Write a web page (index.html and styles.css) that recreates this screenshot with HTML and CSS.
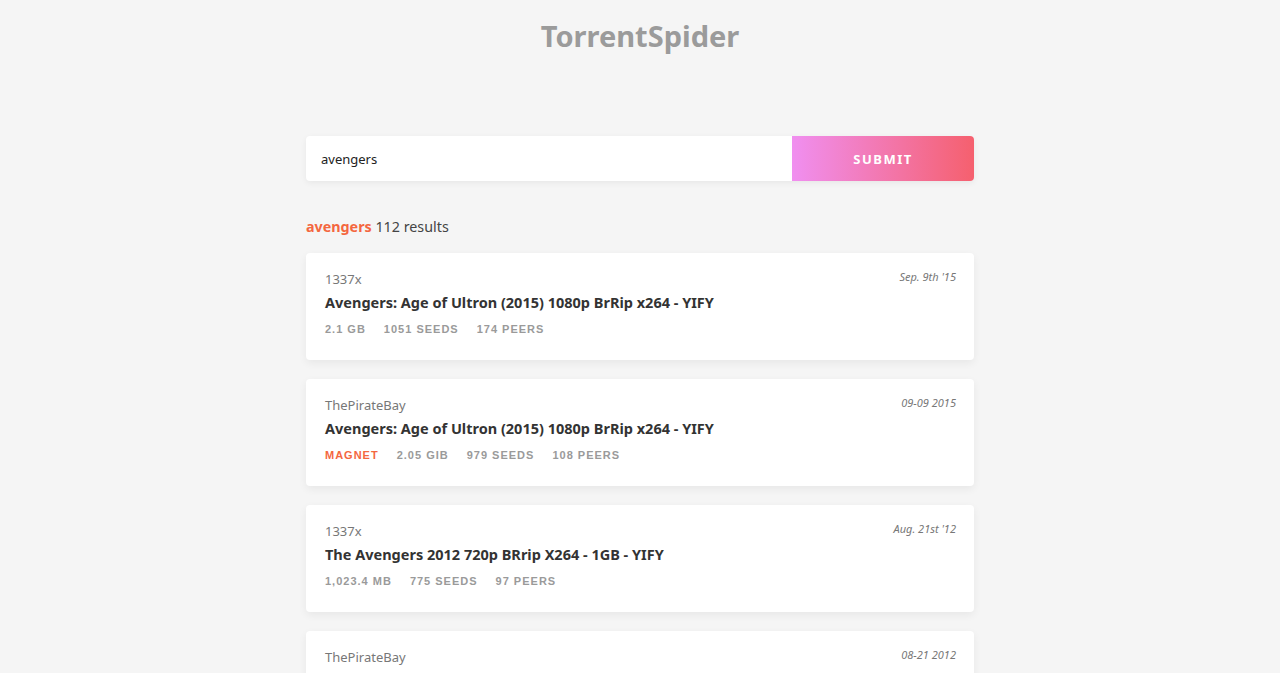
FILE: index.html
```html
<!DOCTYPE html>
<html lang="en">
<head>
  <meta charset="UTF-8" />
  <title>TorrentSpider</title>
  <link rel="stylesheet" href="styles.css">
</head>
<body>

  <h1 class="logo">TorrentSpider</h1>

  <div class="wrap">
    <form class="search">
      <input type="text" class="search-input" value="avengers" />
      <button type="submit" class="search-btn">Submit</button>
    </form>

    <div class="summary"><span class="term">avengers</span> 112 results</div>

    <div class="results">
      <div class="result">
        <div class="result-top">
          <span class="source">1337x</span>
          <span class="date">Sep. 9th '15</span>
        </div>
        <div class="result-title">Avengers: Age of Ultron (2015) 1080p BrRip x264 - YIFY</div>
        <div class="meta">
          <span>2.1 GB</span>
          <span>1051 seeds</span>
          <span>174 peers</span>
        </div>
      </div>

      <div class="result">
        <div class="result-top">
          <span class="source">ThePirateBay</span>
          <span class="date">09-09 2015</span>
        </div>
        <div class="result-title">Avengers: Age of Ultron (2015) 1080p BrRip x264 - YIFY</div>
        <div class="meta">
          <a class="magnet">Magnet</a>
          <span>2.05 GiB</span>
          <span>979 seeds</span>
          <span>108 peers</span>
        </div>
      </div>

      <div class="result">
        <div class="result-top">
          <span class="source">1337x</span>
          <span class="date">Aug. 21st '12</span>
        </div>
        <div class="result-title">The Avengers 2012 720p BRrip X264 - 1GB - YIFY</div>
        <div class="meta">
          <span>1,023.4 MB</span>
          <span>775 seeds</span>
          <span>97 peers</span>
        </div>
      </div>

      <div class="result">
        <div class="result-top">
          <span class="source">ThePirateBay</span>
          <span class="date">08-21 2012</span>
        </div>
        <div class="result-title">The Avengers (2012) 1080p BrRip x264 - YIFY</div>
        <div class="meta">
          <a class="magnet">Magnet</a>
          <span>1.84 GiB</span>
          <span>612 seeds</span>
          <span>88 peers</span>
        </div>
      </div>
    </div>
  </div>

</body>
</html>
```

FILE: styles.css
```css
body {
  margin: 0;
  padding: 0 0 40px;
  background: #f5f5f5;
  color: #333;
  font-family: 'Noto Sans', 'Open Sans', sans-serif;
}

.logo {
  margin: 0;
  padding-top: 17px;
  text-align: center;
  font-size: 29px;
  line-height: 38px;
  font-weight: 700;
  color: #9b9b9b;
}

.wrap {
  width: 668px;
  margin: 81px auto 0;
}

.search {
  display: flex;
  height: 45px;
  border-radius: 4px;
  background: #fff;
  box-shadow: 0 2px 6px rgba(0,0,0,0.06);
  overflow: hidden;
}

.search-input {
  flex: 1;
  border: none;
  outline: none;
  padding: 0 15px;
  font-family: inherit;
  font-size: 13px;
  color: #222;
  background: transparent;
}

.search-btn {
  width: 182px;
  border: none;
  background: linear-gradient(to right, #f08ff0, #f5606e);
  color: #fff;
  font-family: inherit;
  font-size: 13px;
  font-weight: 700;
  letter-spacing: 1.5px;
  text-transform: uppercase;
  cursor: pointer;
}

.summary {
  margin-top: 35px;
  font-size: 14.3px;
  line-height: 22px;
  color: #444;
}

.summary .term {
  font-weight: 700;
  color: #f4673f;
}

.results {
  margin-top: 15px;
  display: flex;
  flex-direction: column;
  gap: 19px;
}

.result {
  background: #fff;
  border-radius: 4px;
  padding: 16px 18px 24px 19px;
  box-shadow: 0 3px 8px rgba(0,0,0,0.06);
}

.result-top {
  display: flex;
  justify-content: space-between;
  align-items: flex-start;
}

.source {
  font-size: 13px;
  line-height: 20px;
  color: #777;
}

.date {
  font-size: 11px;
  line-height: 16px;
  font-style: italic;
  color: #777;
}

.result-title {
  margin-top: 2px;
  font-size: 14.5px;
  line-height: 22px;
  font-weight: 700;
  color: #333;
}

.meta {
  margin-top: 9px;
  display: flex;
  gap: 18px;
  font-family: 'Liberation Sans', Arial, sans-serif;
  font-size: 11px;
  line-height: 14px;
  font-weight: 700;
  letter-spacing: 1px;
  text-transform: uppercase;
  color: #9a9a9a;
}

.magnet {
  color: #f4673f;
  cursor: pointer;
}
```
